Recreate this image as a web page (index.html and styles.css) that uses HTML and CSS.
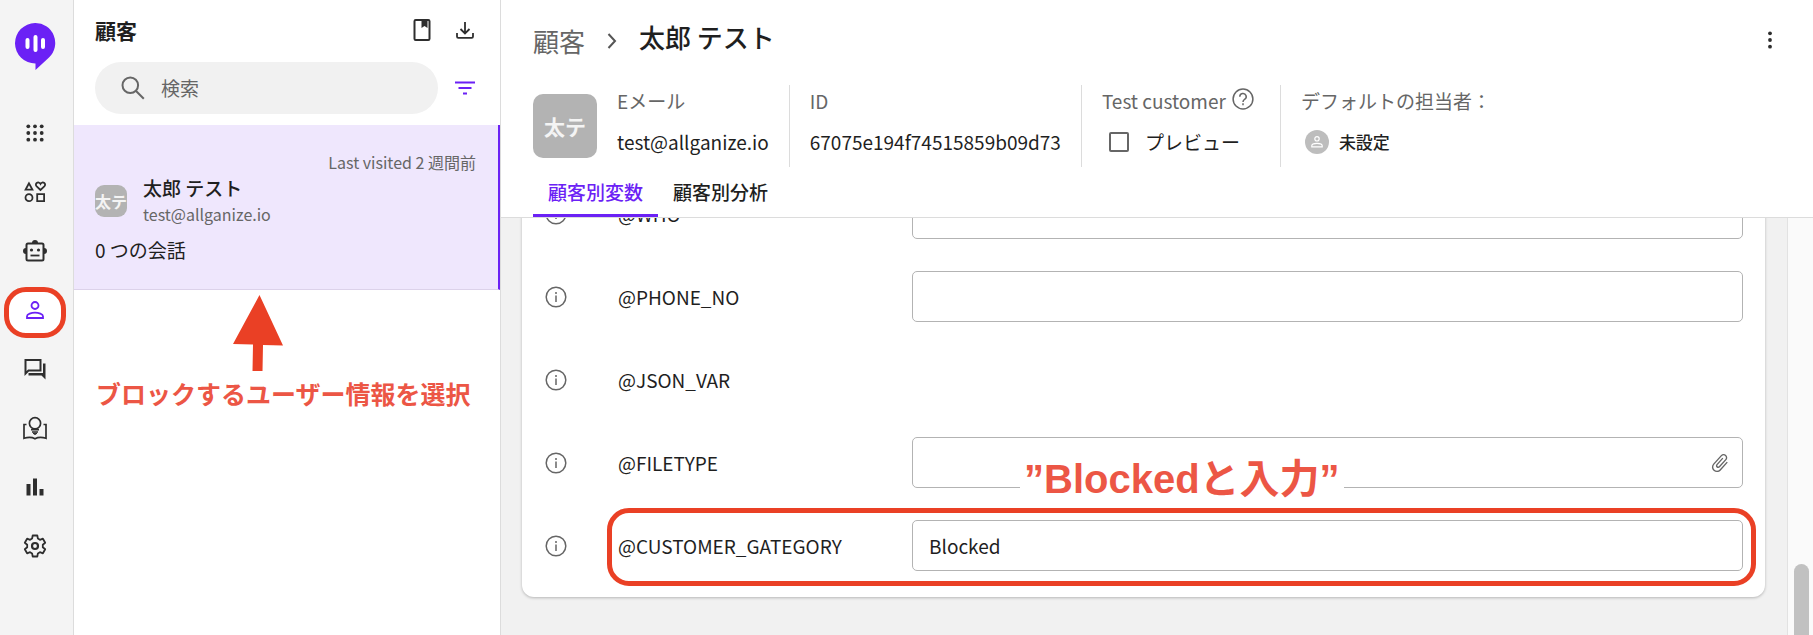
FILE: index.html
```html
<!DOCTYPE html>
<html lang="ja">

<head>
    <meta charset="UTF-8">
    <meta name="viewport" content="width=device-width, initial-scale=1.0">
    <title>顧客</title>
    <link rel="stylesheet" href="styles.css">
</head>

<body>
    <nav class="sidebar">
        <a href="#" class="logo" aria-label="Alli">
            <svg width="42" height="48" viewBox="0 0 42 48">
                <path d="M21 0a20 20 0 0 1 14 34.500L21.500 47v-6.500A20.200 20.200 0 0 1 21 0z" fill="#6b21f5" />
                <path d="M13.500 17v7M21.500 14v13M29 17v7" stroke="#fff" stroke-width="4" stroke-linecap="round" />
            </svg>
        </a>
        <a href="#" class="nav-item" aria-label="アプリ">
            <svg width="18" height="18" viewBox="0 0 18 18" fill="#2e2e2e">
                <circle cx="2.300" cy="2.300" r="1.900" />
                <circle cx="9" cy="2.300" r="1.900" />
                <circle cx="15.700" cy="2.300" r="1.900" />
                <circle cx="2.300" cy="9" r="1.900" />
                <circle cx="9" cy="9" r="1.900" />
                <circle cx="15.700" cy="9" r="1.900" />
                <circle cx="2.300" cy="15.700" r="1.900" />
                <circle cx="9" cy="15.700" r="1.900" />
                <circle cx="15.700" cy="15.700" r="1.900" />
            </svg>
        </a>
        <a href="#" class="nav-item" aria-label="スキル">
            <svg width="22" height="22" viewBox="0 0 22 22" fill="none" stroke="#2e2e2e" stroke-width="1.800">
                <path d="M5 2.300L1.600 8.600h6.800z" />
                <path d="M16.500 9l-3.800-3.600a2.200 2.200 0 0 1 0-3.400c1.300-1 3-.6 3.800.9.800-1.500 2.500-1.900 3.800-.9a2.200 2.200 0 0 1 0 3.400z" />
                <circle cx="5" cy="16.700" r="3.500" />
                <path d="M13.200 13.200h6.900v6.900h-6.900z" />
            </svg>
        </a>
        <a href="#" class="nav-item" aria-label="ボット">
            <svg width="26" height="24" viewBox="0 0 26 24">
                <rect x="4.500" y="4.500" width="17" height="17" rx="1.500" fill="none" stroke="#2e2e2e" stroke-width="2" />
                <path d="M10 4a3 3 0 0 1 6 0zM4 9a3 3 0 0 0 0 6zM22 9a3 3 0 0 1 0 6z" fill="#2e2e2e" />
                <circle cx="9.500" cy="11" r="1.600" fill="#2e2e2e" />
                <circle cx="16.500" cy="11" r="1.600" fill="#2e2e2e" />
                <path d="M8.500 16.500h9" stroke="#2e2e2e" stroke-width="1.800" />
            </svg>
        </a>
        <a href="#" class="nav-item active" aria-label="顧客">
            <svg width="18" height="18" viewBox="0 0 18 18" fill="none" stroke="#6b21f5" stroke-width="1.800">
                <circle cx="9" cy="4.500" r="3.500" />
                <path d="M1 17v-1.800c0-2.300 4.500-3.600 8-3.600s8 1.300 8 3.600V17z" />
            </svg>
        </a>
        <a href="#" class="nav-item" aria-label="会話">
            <svg width="22" height="22" viewBox="0 0 22 22">
                <path d="M1.500 2h15v10.500h-12l-3 3z" fill="none" stroke="#2e2e2e" stroke-width="2" />
                <path d="M19 5.500h2.500v16l-4-4h-13V15H19z" fill="#2e2e2e" />
            </svg>
        </a>
        <a href="#" class="nav-item" aria-label="ナレッジ">
            <svg width="24" height="24" viewBox="0 0 24 24" fill="none" stroke="#2e2e2e" stroke-width="1.700">
                <circle cx="12" cy="7.300" r="5.600" />
                <path d="M8 13.700h8M9 16h6" />
                <path d="M10 17.300h4l-2 1.200z" fill="#2e2e2e" stroke-width="1" />
                <path d="M3.500 8.500H1v13.800c4-1.200 8-1.100 11 .4 3-1.500 7-1.600 11-.4V8.500h-2.500" />
            </svg>
        </a>
        <a href="#" class="nav-item" aria-label="分析">
            <svg width="18" height="18" viewBox="0 0 18 18" fill="#2e2e2e">
                <path d="M.5 6h4v11.500h-4zM7 .5h4v17H7zM13.500 11h4v6.500h-4z" />
            </svg>
        </a>
        <a href="#" class="nav-item" aria-label="設定">
            <svg width="24" height="24" viewBox="0 0 24 24" fill="none" stroke="#2e2e2e" stroke-width="1.800" stroke-linejoin="round">
                <path d="M9.700 1.500h4.600l.6 3.100 2 1.200 3-1.100 2.300 4-2.400 2v2.600l2.400 2-2.300 4-3-1.100-2 1.200-.6 3.100H9.700l-.6-3.100-2-1.200-3 1.100-2.300-4 2.400-2v-2.600l-2.400-2 2.300-4 3 1.100 2-1.200z" />
                <circle cx="12" cy="12" r="3" stroke-width="2.200" />
            </svg>
        </a>
    </nav>

    <section class="panel">
        <div class="panel-head">
            <h2>顧客</h2>
            <button type="button" aria-label="ブックマーク">
                <svg width="20" height="22" viewBox="0 0 20 22">
                    <rect x="2.500" y="1" width="15" height="20" rx="1.200" fill="none" stroke="#2e2e2e" stroke-width="2" />
                    <path d="M9.500 1h6v8l-3-2-3 2z" fill="#2e2e2e" />
                </svg>
            </button>
            <button type="button" aria-label="ダウンロード">
                <svg width="20" height="20" viewBox="0 0 20 20" fill="none" stroke="#2e2e2e" stroke-width="1.800">
                    <path d="M10 2v11M5.500 9l4.500 4.500L14.500 9M2 13v3.500q0 1.300 1.300 1.300h13.400q1.300 0 1.300-1.300V13" />
                </svg>
            </button>
        </div>
        <div class="search-row">
            <div class="search">
                <svg width="24" height="24" viewBox="0 0 24 24" fill="none" stroke="#666" stroke-width="2">
                    <circle cx="9.300" cy="9.300" r="7.800" />
                    <path d="M14.800 14.800l8 8" />
                </svg>
                <input type="text" placeholder="検索" aria-label="検索">
            </div>
            <button type="button" aria-label="フィルター">
                <svg width="20" height="14" viewBox="0 0 20 14" stroke="#6b21f5" stroke-width="2">
                    <path d="M0 1.500h20M3.500 7h13M8 12.500h4" />
                </svg>
            </button>
        </div>

        <a href="#" class="customer">
            <span class="visited">Last visited 2 週間前</span>
            <span class="customer-info">
                <span class="avatar avatar-small">太テ</span>
                <span>
                    <span class="customer-name">太郎 テスト</span>
                    <span class="customer-email">test@allganize.io</span>
                </span>
            </span>
            <span class="talks">0 つの会話</span>
        </a>

        <div class="note-select">
            <svg width="50" height="77" viewBox="0 0 50 77" fill="#ea4025">
                <path d="M26.500 0L50 50.500l-20-.5-.5 26h-10l.5-26.500L0 49z" />
            </svg>
            <p>ブロックするユーザー情報を選択</p>
        </div>
    </section>

    <main class="main">
        <header class="header">
            <div class="breadcrumb">
                <a href="#">顧客</a>
                <svg width="12" height="44" viewBox="0 0 12 44" fill="none" stroke="#555" stroke-width="2">
                    <path d="M2.500 15l6.500 7-6.500 7" />
                </svg>
                <h1>太郎 テスト</h1>
                <button type="button" class="more" aria-label="メニュー">
                    <svg width="4" height="18" viewBox="0 0 4 18" fill="#2e2e2e">
                        <circle cx="2" cy="2.300" r="1.900" />
                        <circle cx="2" cy="9" r="1.900" />
                        <circle cx="2" cy="15.700" r="1.900" />
                    </svg>
                </button>
            </div>

            <div class="profile">
                <span class="avatar avatar-large">太テ</span>
                <div class="field">
                    <div class="field-label">Eメール</div>
                    <div class="field-value">test@allganize.io</div>
                </div>
                <div class="field">
                    <div class="field-label">ID</div>
                    <div class="field-value">67075e194f74515859b09d73</div>
                </div>
                <div class="field">
                    <div class="field-label">Test customer
                        <svg class="help" width="22" height="22" viewBox="0 0 22 22" fill="none" stroke="#666" stroke-width="1.500">
                            <circle cx="11" cy="11" r="9.900" />
                            <path d="M7.800 8.700a3.200 3.200 0 1 1 4.800 2.700q-1.600 1-1.600 2.500M11 15.300v1.900" />
                        </svg>
                    </div>
                    <label class="field-value preview"><input type="checkbox">プレビュー</label>
                </div>
                <div class="field">
                    <div class="field-label">デフォルトの担当者：</div>
                    <div class="field-value assignee">
                        <svg width="24" height="24" viewBox="0 0 24 24">
                            <circle cx="12" cy="12" r="12" fill="#bdbdbd" />
                            <g fill="none" stroke="#fff" stroke-width="1.200">
                                <circle cx="12" cy="8.800" r="2.200" />
                                <path d="M6.800 16.800v-1c0-1.600 3-2.400 5.200-2.400s5.200.8 5.200 2.400v1z" />
                            </g>
                        </svg>
                        未設定
                    </div>
                </div>
            </div>

            <div class="tabs">
                <a href="#" class="tab selected">顧客別変数</a>
                <a href="#" class="tab">顧客別分析</a>
            </div>
        </header>

        <div class="content">
            <div class="scroll">
                <div class="card">
                    <div class="row">
                        <svg class="info" width="22" height="22" viewBox="0 0 22 22">
                            <circle cx="11" cy="11" r="9.800" />
                            <path d="M11 9.500V16M11 6v2" />
                        </svg>
                        <label for="who">@WHO</label>
                        <input type="text" id="who">
                    </div>
                    <div class="row">
                        <svg class="info" width="22" height="22" viewBox="0 0 22 22">
                            <circle cx="11" cy="11" r="9.800" />
                            <path d="M11 9.500V16M11 6v2" />
                        </svg>
                        <label for="phone">@PHONE_NO</label>
                        <input type="text" id="phone">
                    </div>
                    <div class="row">
                        <svg class="info" width="22" height="22" viewBox="0 0 22 22">
                            <circle cx="11" cy="11" r="9.800" />
                            <path d="M11 9.500V16M11 6v2" />
                        </svg>
                        <span>@JSON_VAR</span>
                    </div>
                    <div class="row">
                        <svg class="info" width="22" height="22" viewBox="0 0 22 22">
                            <circle cx="11" cy="11" r="9.800" />
                            <path d="M11 9.500V16M11 6v2" />
                        </svg>
                        <label for="filetype">@FILETYPE</label>
                        <input type="text" id="filetype">
                        <button type="button" class="attach" aria-label="ファイルを添付">
                            <svg width="22" height="24" viewBox="0 0 24 24" fill="#666">
                                <path transform="rotate(42 12 12)" d="M16.500 6v11.500c0 2.210-1.790 4-4 4s-4-1.790-4-4V5c0-1.380 1.120-2.500 2.500-2.500s2.500 1.120 2.500 2.500v10.500c0 .55-.45 1-1 1s-1-.45-1-1V6H10v9.500c0 1.380 1.120 2.500 2.500 2.500s2.500-1.120 2.500-2.500V5c0-2.210-1.790-4-4-4S7 2.790 7 5v12.500c0 3.040 2.460 5.500 5.500 5.500s5.500-2.460 5.500-5.500V6h-1.500z" />
                            </svg>
                        </button>
                        <strong class="note-input">”Blockedと入力”</strong>
                    </div>
                    <div class="row marked">
                        <svg class="info" width="22" height="22" viewBox="0 0 22 22">
                            <circle cx="11" cy="11" r="9.800" />
                            <path d="M11 9.500V16M11 6v2" />
                        </svg>
                        <label for="category">@CUSTOMER_GATEGORY</label>
                        <input type="text" id="category" value="Blocked">
                    </div>
                </div>
            </div>
            <div class="scrollbar">
                <div class="thumb"></div>
            </div>
        </div>
    </main>
</body>

</html>
```

FILE: styles.css
```css
*,
*::before,
*::after {
    margin: 0;
    padding: 0;
    box-sizing: border-box;
}

body {
    display: flex;
    height: 100vh;
    overflow: hidden;
    font-family: "Noto Sans CJK JP", sans-serif;
    font-size: 19px;
    line-height: 26px;
    color: #1f1f1f;
    background-color: #fff;
}

a {
    color: inherit;
    text-decoration: none;
}

button {
    display: flex;
    border: none;
    background: none;
    cursor: pointer;
}

input {
    font: inherit;
    color: inherit;
    outline: none;
}

svg {
    display: block;
    flex-shrink: 0;
}

/* Sidebar */
.sidebar {
    width: 74px;
    flex-shrink: 0;
    padding-right: 3px;
    background-color: #f4f4f4;
    border-right: 1px solid #dcdcdc;
}

.logo {
    display: flex;
    justify-content: center;
    height: 103px;
    padding-top: 23px;
}

.nav-item {
    position: relative;
    display: flex;
    align-items: center;
    justify-content: center;
    height: 59px;
}

.nav-item svg {
    position: relative;
}

.nav-item.active::before {
    content: "";
    position: absolute;
    top: 7px;
    left: 4px;
    right: 4px;
    height: 51px;
    border: 5px solid #ea4025;
    border-radius: 22px;
    background-color: #fff;
}

/* Customer list */
.panel {
    width: 427px;
    flex-shrink: 0;
    border-right: 1px solid #dcdcdc;
}

.panel-head {
    display: flex;
    align-items: center;
    gap: 23px;
    height: 62px;
    padding: 0 25px 2px 21px;
}

.panel-head h2 {
    flex: 1;
    font-size: 21px;
    font-weight: 700;
}

.search-row {
    display: flex;
    align-items: center;
    gap: 17px;
    height: 63px;
    padding: 0 25px 11px 21px;
}

.search {
    flex: 1;
    display: flex;
    align-items: center;
    gap: 16px;
    height: 52px;
    padding: 0 26px;
    border-radius: 26px;
    background-color: #f1f1f1;
}

.search input {
    width: 100%;
    border: none;
    background: none;
}

.search input::placeholder {
    color: #666;
}

.customer {
    display: block;
    height: 165px;
    padding: 25px 22px 0 21px;
    background-color: #efe7fd;
    border-right: 2px solid #6b21f5;
    border-bottom: 1px solid #dcd2ea;
}

.customer span {
    display: block;
}

.customer .visited {
    font-size: 16px;
    line-height: 25px;
    text-align: right;
    color: #666;
}

.customer .customer-info {
    display: flex;
    align-items: center;
    gap: 16px;
    margin-bottom: 10px;
}

.customer-name {
    font-weight: 500;
}

.customer .customer-email {
    font-size: 16px;
    color: #666;
}

.customer .avatar,
.avatar {
    display: flex;
    align-items: center;
    justify-content: center;
    flex-shrink: 0;
    font-weight: 700;
    white-space: nowrap;
    color: #f4f4f4;
    background-color: #b3b3b3;
}

.avatar-small {
    width: 32px;
    height: 32px;
    border-radius: 9px;
    font-size: 16px;
}

.avatar-large {
    width: 64px;
    height: 64px;
    border-radius: 10px;
    font-size: 21px;
}

.note-select {
    padding: 5px 0 0 22px;
    font-size: 25px;
    font-weight: 700;
    line-height: 42px;
    white-space: nowrap;
    color: #ec5645;
}

.note-select svg {
    margin-left: 137px;
}

/* Customer header */
.main {
    flex: 1;
    min-width: 0;
    display: flex;
    flex-direction: column;
}

.header {
    padding: 0 32px;
    border-bottom: 1px solid #dcdcdc;
}

.breadcrumb {
    display: flex;
    align-items: flex-start;
    height: 85px;
    padding-top: 19px;
    font-size: 26px;
}

.breadcrumb a {
    line-height: 44px;
    color: #666;
}

.breadcrumb svg {
    margin: 0 21px;
}

.breadcrumb h1 {
    flex: 1;
    font-size: 26px;
    font-weight: 500;
    line-height: 36px;
}

.breadcrumb .more {
    align-items: center;
    height: 42px;
}

.breadcrumb .more svg {
    margin: 0 9px;
}

.profile {
    display: flex;
    align-items: center;
    height: 82px;
    white-space: nowrap;
}

.field {
    padding: 0 20px;
    border-left: 1px solid #dcdcdc;
}

.avatar + .field {
    border-left: none;
}

.field-label,
.field-value {
    display: flex;
    align-items: center;
}

.field-label {
    height: 32px;
    color: #666;
}

.field-value {
    height: 50px;
}

.help {
    margin: 0 6px 4px;
}

.preview input {
    appearance: none;
    width: 20px;
    height: 20px;
    margin: 0 16px 0 7px;
    border: 2px solid #666;
    border-radius: 2px;
}

.assignee {
    gap: 10px;
    padding-left: 4px;
    font-size: 17px;
    font-weight: 500;
}

.tabs {
    display: flex;
}

.tab {
    height: 50px;
    padding: 0 15px;
    line-height: 50px;
    font-weight: 500;
}

.tab.selected {
    color: #6b21f5;
    border-bottom: 3px solid #6b21f5;
}

/* Variables */
.content {
    flex: 1;
    min-height: 0;
    display: flex;
    background-color: #f1f1f1;
}

.scroll {
    flex: 1;
    display: flex;
    flex-direction: column;
    justify-content: flex-end;
    padding: 0 22px 38px 21px;
    overflow: hidden;
}

.card {
    flex-shrink: 0;
    padding: 10px 22px 10px 23px;
    border-radius: 12px;
    background-color: #fff;
    box-shadow: 0 1px 3px rgba(0, 0, 0, 0.25);
}

.row {
    position: relative;
    display: grid;
    grid-template-columns: 73px 294px 1fr;
    align-items: center;
    height: 83px;
}

.row input {
    width: 100%;
    height: 51px;
    padding: 0 16px;
    border: 1px solid #b3b3b3;
    border-radius: 5px;
}

.info {
    fill: none;
    stroke: #666;
    stroke-width: 1.500;
}

.attach {
    position: absolute;
    right: 12px;
}

.note-input {
    position: absolute;
    top: 34px;
    left: 475px;
    padding: 0 4px;
    font-family: "Liberation Sans", "Noto Sans CJK JP", sans-serif;
    font-size: 40px;
    line-height: 48px;
    white-space: nowrap;
    color: #ec5645;
    background-color: #fff;
}

.row.marked::after {
    content: "";
    position: absolute;
    top: 4px;
    right: -13px;
    bottom: 1px;
    left: 62px;
    border: 5px solid #ea4025;
    border-radius: 22px;
    pointer-events: none;
}

.scrollbar {
    width: 26px;
    padding: 346px 4px 0 6px;
    border-left: 1px solid #e2e2e2;
    background-color: #fafafa;
}

.thumb {
    height: 100%;
    border-radius: 8px 8px 0 0;
    background-color: #c1c1c1;
}
```
